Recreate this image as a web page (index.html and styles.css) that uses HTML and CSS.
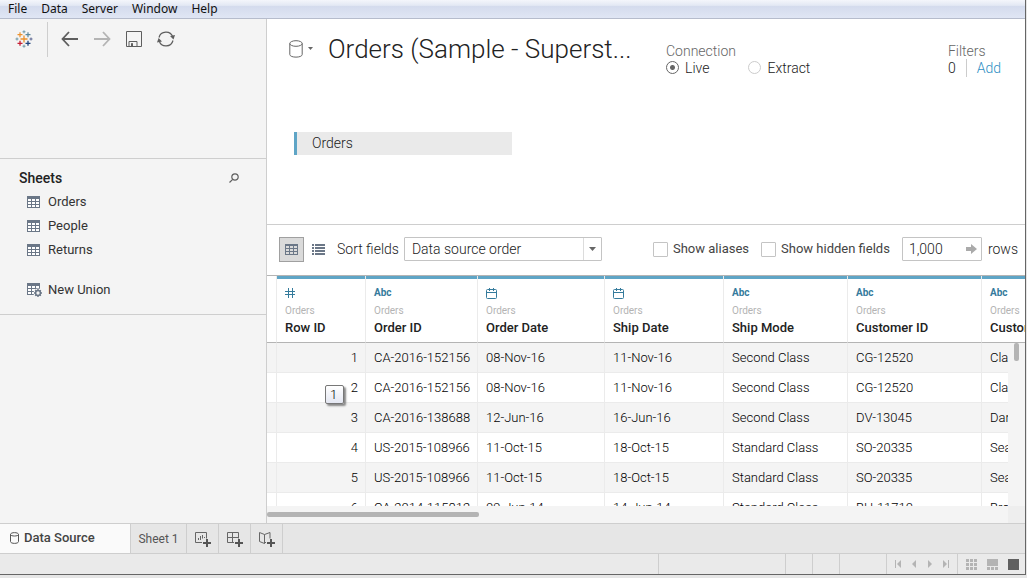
FILE: index.html
```html
<!DOCTYPE html>
<html lang="en">
<head>
<meta charset="utf-8">
<title>Orders (Sample - Superstore)</title>
<link rel="stylesheet" href="styles.css">
</head>
<body>
<svg class="defs" aria-hidden="true">
  <symbol id="sheet" viewBox="0 0 13 12"><path fill="#fff" d="M0 0h13v12H0z"/><path fill="#6b7787" d="M0 0h13v3H0zM0 3h1v9H0zM12 3h1v9h-1zM4 3h1v9H4zM8 3h1v9H8zM0 5h13v1H0zM0 8h13v1H0zM0 11h13v1H0z"/></symbol>
  <symbol id="date" viewBox="0 0 11 11"><path fill="none" stroke="#357b9c" d="M1.5 1.5h8q1 0 1 1v7q0 1-1 1h-8q-1 0-1-1v-7q0-1 1-1zM0 4.500h11M3.500 0v3M7.500 0v3"/></symbol>
  <symbol id="plus" viewBox="0 0 8 8"><path fill="#555" d="M3 0h2v3h3v2H5v3H3V5H0V3h3z"/></symbol>
</svg>
<div class="app">
  <nav class="menubar">
    <button>File</button><button>Data</button><button>Server</button><button>Window</button><button>Help</button>
  </nav>
  <div class="main">
    <aside class="sidebar">
      <div class="tools">
        <button class="home" aria-label="Start page">
          <svg width="18" height="18" viewBox="0 0 18 18" fill="none">
            <path stroke="#eb912c" stroke-width="1.300" d="M9 5.500v7M5.500 9h7"/>
            <path stroke="#eb912c" stroke-width="1.200" d="M5 2.200v5M2.500 4.700h5"/>
            <path stroke="#59879b" stroke-width="1.200" d="M13 2.200v5M10.500 4.700h5"/>
            <path stroke="#c72035" stroke-width="1.300" d="M5 10.800v5M2.500 13.300h5"/>
            <path stroke="#1f447e" stroke-width="1.300" d="M13 10.800v5M10.500 13.300h5"/>
            <path stroke="#7199a6" d="M9 .3v3M7.500 1.800h3M2 7.500v3M.5 9h3M9 14.700v3M7.500 16.200h3"/>
            <path stroke="#5b6591" d="M16 7.500v3M14.500 9h3"/>
          </svg>
        </button>
        <div class="toolset">
          <button aria-label="Back"><svg width="18" height="16" viewBox="0 0 18 16" fill="none" stroke="#5e5e5e" stroke-width="1.800"><path d="M8 1 1.500 8 8 15M2 8h15"/></svg></button>
          <button aria-label="Forward"><svg width="18" height="16" viewBox="0 0 18 16" fill="none" stroke="#b4b4b4" stroke-width="1.800"><path d="m10 1 6.500 7L10 15M16 8H1"/></svg></button>
          <button aria-label="Save"><svg width="18" height="16" viewBox="0 0 18 16" fill="none" stroke="#5e5e5e"><path d="M1.500.500h15v15h-15zM4 15v-4.500h8V15"/><path fill="#5e5e5e" d="M6.500 12.500h1V15h-1z"/></svg></button>
          <button aria-label="Refresh"><svg width="18" height="16" viewBox="0 0 18 16" fill="none" stroke="#5e5e5e" stroke-width="1.200"><path d="M2 6.500A7.200 7.200 0 0 1 15.800 6M16 9.500A7.200 7.200 0 0 1 2.200 10"/><path fill="#5e5e5e" stroke="none" d="m13 5 5-1-1.500 4.500zM0 11.500 1.600 7 5 10.500z"/></svg></button>
        </div>
      </div>
      <section class="sheets">
        <div class="sheets-head">
          <h2>Sheets</h2>
          <button aria-label="Search sheets"><svg width="10" height="10" viewBox="0 0 10 10" fill="none" stroke="#5e5e5e" stroke-width="1.200"><circle cx="6" cy="4" r="3.200"/><path d="M3.700 6.300.5 9.500"/></svg></button>
        </div>
        <ul>
          <li><svg width="13" height="12"><use href="#sheet"/></svg>Orders</li>
          <li><svg width="13" height="12"><use href="#sheet"/></svg>People</li>
          <li><svg width="13" height="12"><use href="#sheet"/></svg>Returns</li>
        </ul>
        <button class="union"><svg width="15" height="14" viewBox="0 0 15 14"><use href="#sheet" width="13" height="12"/><circle cx="11" cy="10" r="4.500" fill="#f4f4f4"/><circle cx="11" cy="10" r="2.400" fill="#f4f4f4" stroke="#6b7787" stroke-width="1.500"/><path stroke="#6b7787" stroke-width="1.400" d="M11 6v1.500M11 12.500V14M7 10h1.500M13.500 10H15M8.200 7.200l1 1M12.800 11.800l1 1M8.200 12.800l1-1M12.800 8.200l1-1"/></svg>New Union</button>
      </section>
    </aside>
    <main class="content">
      <section class="canvas">
        <header class="source">
          <button class="source-menu" aria-label="Data source options">
            <svg width="24" height="18" viewBox="0 0 24 18" fill="none" stroke="#666"><ellipse cx="7" cy="3.500" rx="6.200" ry="2.800"/><path d="M.8 3.500v11c0 3.500 12.400 3.500 12.400 0v-11"/><path fill="#666" stroke="none" d="M19 7h5l-2.500 3z"/></svg>
          </button>
          <h1>Orders (Sample - Superst...</h1>
          <fieldset class="connection">
            <legend>Connection</legend>
            <label><input type="radio" name="connection" checked>Live</label>
            <label><input type="radio" name="connection">Extract</label>
          </fieldset>
          <div class="filters">
            <div class="caption">Filters</div>
            <div class="filter-row"><span>0</span><a href="#add">Add</a></div>
          </div>
        </header>
        <div class="chip">Orders</div>
      </section>
      <section class="options">
        <button class="view on" aria-label="Data grid"><svg width="13" height="11" viewBox="0 0 13 11" fill="#6b7787"><path d="M0 0h13v2H0zM0 2h1v9H0zM12 2h1v9h-1zM4 2h1v9H4zM8 2h1v9H8zM0 4h13v1H0zM0 7h13v1H0zM0 10h13v1H0z"/></svg></button>
        <button class="view list" aria-label="Metadata"><svg width="13" height="11" viewBox="0 0 13 11" fill="#6b7787"><path d="M0 0h2v2H0zM3 0h10v2H3zM0 3h2v2H0zM3 3h10v2H3zM0 6h2v2H0zM3 6h10v2H3zM0 9h2v2H0zM3 9h10v2H3z"/></svg></button>
        <label for="sort">Sort fields</label>
        <div class="select"><select id="sort"><option>Data source order</option></select><span class="drop"><svg width="7" height="4"><path fill="#666" d="M0 0h7L3.500 4z"/></svg></span></div>
        <div class="checks">
          <label><input type="checkbox">Show aliases</label>
          <label><input type="checkbox">Show hidden fields</label>
        </div>
        <div class="rows">
          <div class="count"><input id="rows" type="text" value="1,000"><button aria-label="Apply"><svg width="11" height="10"><path fill="#aaa" d="M0 3h5V0l6 5-6 5V7H0z"/></svg></button></div>
          <label for="rows">rows</label>
        </div>
      </section>
      <section class="grid">
        <div class="viewport">
          <table>
            <colgroup><col class="c-gutter"><col class="c-row"><col class="c-order"><col class="c-date"><col class="c-ship"><col class="c-mode"><col class="c-cust"><col class="c-name"></colgroup>
            <thead>
              <tr>
                <td></td>
                <th scope="col"><span class="type"><svg width="11" height="10" viewBox="0 0 11 10" stroke="#357b9c"><path d="M3.500 0v10M7.500 0v10M0 3.500h10M0 6.500h10"/></svg></span><small>Orders</small>Row ID</th>
                <th scope="col"><span class="type">Abc</span><small>Orders</small>Order ID</th>
                <th scope="col"><span class="type"><svg width="11" height="11"><use href="#date"/></svg></span><small>Orders</small>Order Date</th>
                <th scope="col"><span class="type"><svg width="11" height="11"><use href="#date"/></svg></span><small>Orders</small>Ship Date</th>
                <th scope="col"><span class="type">Abc</span><small>Orders</small>Ship Mode</th>
                <th scope="col"><span class="type">Abc</span><small>Orders</small>Customer ID</th>
                <th scope="col"><span class="type">Abc</span><small>Orders</small>Customer Name</th>
              </tr>
            </thead>
            <tbody>
              <tr><td></td><td>1</td><td>CA-2016-152156</td><td>08-Nov-16</td><td>11-Nov-16</td><td>Second Class</td><td>CG-12520</td><td>Claire Gute</td></tr>
              <tr><td></td><td><span class="tip">1</span>2</td><td>CA-2016-152156</td><td>08-Nov-16</td><td>11-Nov-16</td><td>Second Class</td><td>CG-12520</td><td>Claire Gute</td></tr>
              <tr><td></td><td>3</td><td>CA-2016-138688</td><td>12-Jun-16</td><td>16-Jun-16</td><td>Second Class</td><td>DV-13045</td><td>Darrin Van Huff</td></tr>
              <tr><td></td><td>4</td><td>US-2015-108966</td><td>11-Oct-15</td><td>18-Oct-15</td><td>Standard Class</td><td>SO-20335</td><td>Sean O'Donnell</td></tr>
              <tr><td></td><td>5</td><td>US-2015-108966</td><td>11-Oct-15</td><td>18-Oct-15</td><td>Standard Class</td><td>SO-20335</td><td>Sean O'Donnell</td></tr>
              <tr><td></td><td>6</td><td>CA-2014-115812</td><td>09-Jun-14</td><td>14-Jun-14</td><td>Standard Class</td><td>BH-11710</td><td>Brosina Hoffman</td></tr>
            </tbody>
          </table>
          <div class="vscroll"><div class="vthumb"></div></div>
        </div>
        <div class="hscroll"><div class="hthumb"></div><div class="corner"></div></div>
      </section>
    </main>
  </div>
  <div class="tabs">
    <button class="tab active"><svg width="9" height="12" viewBox="0 0 9 12" fill="none" stroke="#555"><path d="M.5 2.500v7c0 2.500 8 2.500 8 0v-7c0-2.500-8-2.500-8 0 0 2 8 2 8 0"/></svg>Data Source</button>
    <button class="tab">Sheet 1</button>
    <button class="new" aria-label="New worksheet"><svg width="16" height="16" viewBox="0 0 16 16"><path fill="none" stroke="#666" d="M7 11.500H.5V1.500h11v6M3.500 9V7M5.500 9V5M7.500 7.500V4M9.500 7V6"/><use href="#plus" x="8" y="8" width="8" height="8"/></svg></button>
    <button class="new" aria-label="New dashboard"><svg width="16" height="16" viewBox="0 0 16 16"><path fill="none" stroke="#666" d="M7 11.500H.5V1.500h11v6M5.500 1.500v10M.5 6.500h11"/><use href="#plus" x="8" y="8" width="8" height="8"/></svg></button>
    <button class="new" aria-label="New story"><svg width="16" height="16" viewBox="0 0 16 16"><path fill="none" stroke="#666" d="M7 11 5.500 12.500.5 10.500v-9l5 2 5.500-2v6M5.500 3.500v9"/><use href="#plus" x="8" y="8" width="8" height="8"/></svg></button>
  </div>
  <footer class="status">
    <div class="cell wide"></div><div class="cell"></div><div class="cell"></div><div class="cell mid"></div>
    <div class="pager">
      <button aria-label="First"><svg width="8" height="8" fill="#b4b4b4"><path d="M1 0h1v8H1zM7 0v8L3 4z"/></svg></button>
      <button aria-label="Previous"><svg width="8" height="8" fill="#b4b4b4"><path d="M6 0v8L2 4z"/></svg></button>
      <button aria-label="Next"><svg width="8" height="8" fill="#b4b4b4"><path d="M2 0v8l4-4z"/></svg></button>
      <button aria-label="Last"><svg width="8" height="8" fill="#b4b4b4"><path d="M6 0h1v8H6zM1 0v8l4-4z"/></svg></button>
    </div>
    <div class="modes">
      <button aria-label="Sheet sorter"><svg width="11" height="11" fill="#b4b4b4"><path d="M0 0h3v3H0zM4 0h3v3H4zM8 0h3v3H8zM0 4h3v3H0zM4 4h3v3H4zM8 4h3v3H8zM0 8h3v3H0zM4 8h3v3H4zM8 8h3v3H8z"/></svg></button>
      <button aria-label="Filmstrip"><svg width="11" height="11" fill="#b4b4b4"><path d="M0 0h11v7H0zM0 8h3v3H0zM4 8h3v3H4zM8 8h3v3H8z"/></svg></button>
      <button aria-label="Tabs"><svg width="11" height="11" fill="#606060"><path d="M0 0h11v11H0z"/></svg></button>
    </div>
  </footer>
</div>
</body>
</html>
```
FILE: styles.css
```css
* { box-sizing: border-box; }
body { margin: 0; height: 100vh; padding: 0 1px 3px 0; background: #e6e6e6; font: 300 13px/16px Roboto, "Liberation Sans", sans-serif; color: #222; overflow: hidden; }
button { border: 0; padding: 0; background: none; font: inherit; color: inherit; display: flex; align-items: center; justify-content: center; }
input, select { font: inherit; color: inherit; margin: 0; }
svg { display: block; flex: none; }
h1, h2, ul, fieldset { margin: 0; padding: 0; border: 0; }
.defs { position: absolute; width: 0; height: 0; }
.app { height: 100%; display: flex; flex-direction: column; border: solid #666; border-width: 0 1px 1px 0; }

.menubar { flex: none; height: 19px; display: flex; gap: 14px; padding-left: 8px; border-bottom: 1px solid #b6bccc; background: linear-gradient(#f4f6fb, #e3e8f4 30%, #d4dbed 35%, #e0e6f4); font: 12px/18px "Noto Sans", sans-serif; color: #111; }

.main { flex: 1; min-height: 0; display: flex; }
.sidebar { flex: none; width: 267px; background: #f4f4f4; border-right: 1px solid #cecece; }
.tools { height: 140px; display: flex; align-items: flex-start; padding-top: 3px; border-bottom: 1px solid #cecece; }
.home { width: 47px; height: 34px; }
.toolset { display: flex; gap: 14px; height: 35px; padding: 0 0 2px 13px; border-left: 1px solid #cecece; }
.sheets { padding: 9px 27px 12px 19px; border-bottom: 1px solid #cecece; }
.sheets-head { display: flex; justify-content: space-between; height: 20px; }
h2 { font-size: 14px; line-height: 20px; font-weight: 500; }
ul { list-style: none; }
.sheets li, .union { display: flex; align-items: center; gap: 8px; height: 24px; padding-left: 8px; font-weight: 400; color: #333; }
.sheets ul { padding-top: 2px; margin-bottom: 16px; }
.sheets .union { gap: 6px; }

.content { flex: 1; min-width: 0; display: flex; flex-direction: column; background: #fff; }
.canvas { flex: none; height: 206px; border-bottom: 1px solid #cecece; padding: 12px 24px 0 22px; }
.source { display: flex; align-items: flex-start; height: 101px; }
.source-menu { height: 36px; }
h1 { flex: none; width: 353px; padding-left: 15px; font-size: 26px; line-height: 36px; font-weight: 300; white-space: nowrap; }
.connection, .filters { margin-top: 12px; font-size: 14px; line-height: 16px; }
.connection { display: flex; gap: 39px; }
.connection legend, .caption { padding: 0; color: #666; }
.connection label { display: flex; align-items: center; gap: 6px; height: 17px; }
.connection input { appearance: none; width: 13px; height: 13px; border: 1px solid #ccc; border-radius: 50%; background: #fff; }
.connection input:checked { border-color: #666; background: radial-gradient(#666 2px, #fff 3px); }
.filters { margin-left: auto; }
.filter-row { display: flex; gap: 10px; line-height: 18px; }
.filter-row a { padding-left: 10px; border-left: 1px solid #ccc; color: #2f8fc4; text-decoration: none; }
.chip { width: 218px; height: 23px; margin-left: 5px; padding-left: 15px; border-left: 3px solid #5fa5c6; background: #eaeaea; font-size: 14px; line-height: 23px; }

.options { flex: none; height: 51px; display: flex; align-items: center; padding: 0 7px 2px 12px; border-bottom: 1px solid #b4b4b4; font-size: 14px; white-space: nowrap; }
.view { width: 25px; height: 25px; }
.on { background: #dadada; border: 1px solid #a0a0a0; }
.list { width: 33px; padding-right: 4px; }
.select { display: flex; width: 198px; height: 24px; margin-left: 5px; border: 1px solid #c4c4c4; border-radius: 1px; }
.select select { flex: 1; min-width: 0; appearance: none; border: 0; padding: 0 7px; background: none; }
.drop { width: 18px; display: flex; align-items: center; justify-content: center; border-left: 1px solid #dcdcdc; }
.checks { display: flex; gap: 12px; margin-left: auto; font-size: 13px; font-weight: 400; color: #444; }
.checks label { display: flex; align-items: center; gap: 5px; }
.checks input { appearance: none; width: 15px; height: 15px; border: 1px solid #c4c4c4; border-radius: 1px; background: #fff; }
.rows { display: flex; align-items: center; gap: 6px; margin-left: 12px; }
.count { display: flex; width: 80px; height: 24px; padding-right: 4px; border: 1px solid #c4c4c4; border-radius: 1px; }
.count input { flex: 1; min-width: 0; border: 0; padding: 0 0 0 6px; background: none; }

.grid { flex: 1; min-height: 0; display: flex; flex-direction: column; }
.viewport { flex: 1; min-height: 0; overflow: hidden; position: relative; }
table { width: 849px; table-layout: fixed; border-collapse: separate; border-spacing: 0; color: #000; }
.c-gutter { width: 10px; } .c-row { width: 89px; } .c-order { width: 112px; } .c-date { width: 127px; }
.c-ship { width: 119px; } .c-mode { width: 124px; } .c-cust { width: 134px; } .c-name { width: 134px; }
th, td { padding: 0 8px; border-right: 1px solid #ebebeb; white-space: nowrap; text-align: left; }
td:first-child { padding: 0; }
thead th, thead td { height: 67px; border-bottom: 1px solid #b4b4b4; vertical-align: top; }
th { font-size: 13px; line-height: 17px; font-weight: 500; color: #222; background: linear-gradient(#5fa5c6, #5fa5c6) 0 0 / 100% 3px no-repeat; background-clip: padding-box; }
.type { display: flex; align-items: center; height: 18px; margin-top: 8px; color: #357b9c; font-size: 10px; line-height: 18px; font-weight: 700; }
th small { display: block; color: #b4b4b4; font-size: 10px; font-weight: 400; }
tbody td { height: 30px; border-bottom: 1px solid #ebebeb; }
tbody tr:nth-child(odd) { background: #f4f4f4; }
tbody td:nth-child(2) { text-align: right; padding-right: 7px; position: relative; }
.tip { position: absolute; left: 48px; top: 12px; width: 19px; height: 19px; z-index: 1; border: 1px solid #777; border-radius: 2px; background: linear-gradient(#fff, #e4e7f2); box-shadow: 2px 2px 2px #888; text-align: center; line-height: 18px; padding-right: 2px; }
.vscroll { position: absolute; top: 67px; right: 0; bottom: 0; width: 17px; background: #f4f4f4; }
.vthumb { width: 5px; height: 18px; margin-left: 6px; border-radius: 2px; background: #b4b4b4; }
.hscroll { flex: none; display: flex; align-items: center; justify-content: space-between; height: 17px; background: #f4f4f4; }
.hthumb { width: 28%; height: 5px; border-radius: 2px; background: #b4b4b4; }
.corner { width: 17px; height: 17px; background: #eee; }

.tabs { flex: none; display: flex; height: 31px; border: solid #cecece; border-width: 1px 0; background: #e6e6e6; }
.tab, .new { border-right: 1px solid #cecece; }
.tab { width: 56px; color: #555; font-size: 12px; font-weight: 400; white-space: nowrap; }
.active { width: 131px; justify-content: flex-start; gap: 5px; padding: 0 0 2px 10px; background: #fafafa; color: #444; font-size: 13px; font-weight: 500; }
.new { width: 32px; }
.status { flex: none; display: flex; height: 20px; background: #eaeaea; }
.cell { width: 27px; border-left: 1px solid #cecece; }
.wide { width: 127px; margin-left: auto; }
.mid { width: 47px; }
.pager, .modes { display: flex; align-items: center; border-left: 1px solid #cecece; }
.pager { width: 71px; gap: 8px; padding-left: 7px; }
.modes { width: 68px; gap: 10px; padding-left: 8px; }
```
